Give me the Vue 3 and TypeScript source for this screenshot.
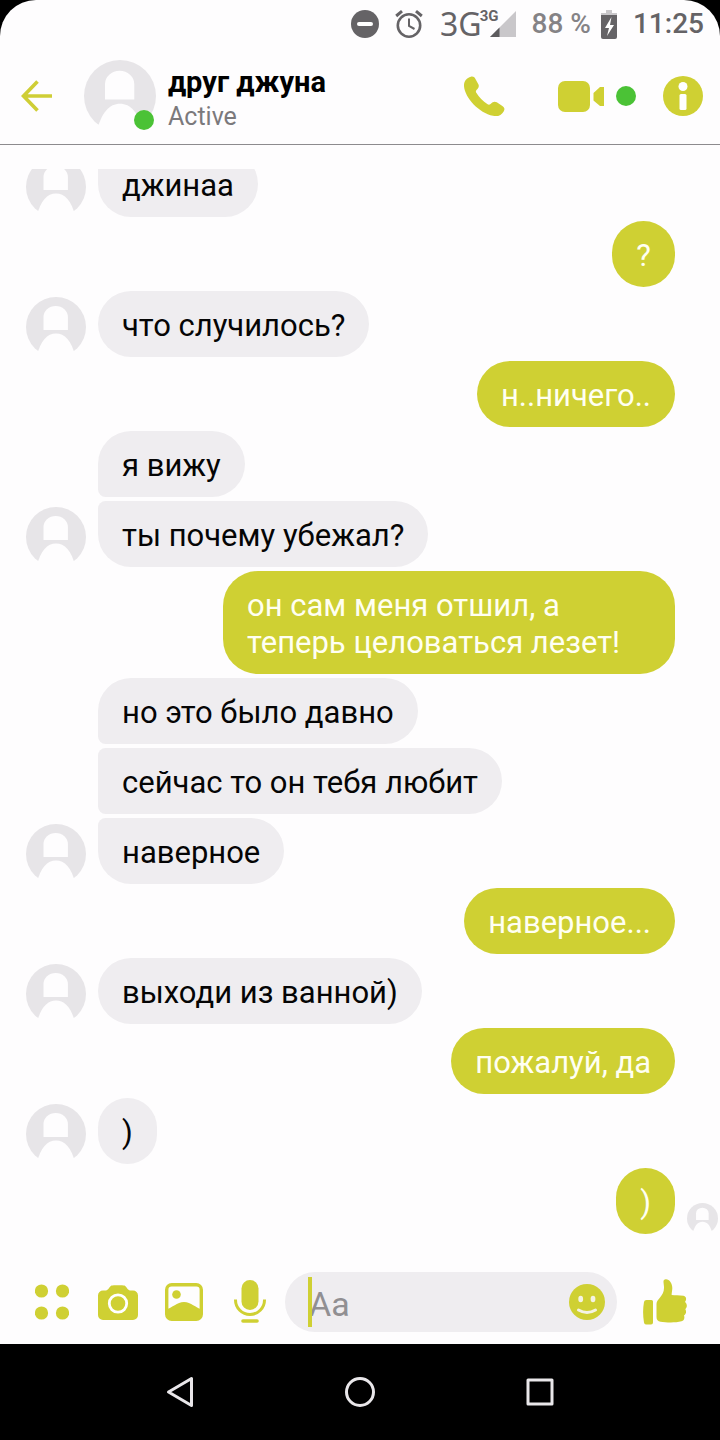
<script setup lang="ts">
import { ref, defineComponent, h } from 'vue'

interface Message {
  id: number
  text: string
  own?: boolean
  avatar?: boolean
  joinTop?: boolean
  joinBottom?: boolean
  seen?: boolean
}

const Avatar = defineComponent({
  setup() {
    return () =>
      h('svg', { viewBox: '0 0 60 60', 'aria-hidden': 'true' }, [
        h('circle', { cx: 30, cy: 30, r: 30, fill: '#e7e5e8' }),
        h('path', { d: 'M17.5 33V20a12.2 11 0 0 1 24.4 0v13z', fill: '#fefdfe' }),
        h('path', { d: 'M10 62C14 44 21 36.500 30 36.500S46 44 50 62z', fill: '#fefdfe' }),
        h('path', { d: 'M0 54h60v7H0z', fill: '#fefdfe' }),
      ])
  },
})

const messages: Message[] = [
  { id: 1, text: 'джинаа', avatar: true, joinTop: true },
  { id: 2, text: '?', own: true },
  { id: 3, text: 'что случилось?', avatar: true },
  { id: 4, text: 'н..ничего..', own: true },
  { id: 5, text: 'я вижу', joinBottom: true },
  { id: 6, text: 'ты почему убежал?', avatar: true, joinTop: true },
  { id: 7, text: 'он сам меня отшил, а теперь целоваться лезет!', own: true },
  { id: 8, text: 'но это было давно', joinBottom: true },
  { id: 9, text: 'сейчас то он тебя любит', joinTop: true, joinBottom: true },
  { id: 10, text: 'наверное', avatar: true, joinTop: true },
  { id: 11, text: 'наверное...', own: true },
  { id: 12, text: 'выходи из ванной)', avatar: true },
  { id: 13, text: 'пожалуй, да', own: true },
  { id: 14, text: ')', avatar: true },
  { id: 15, text: ')', own: true, seen: true },
]

const draft = ref('')
</script>

<template>
  <div class="phone">
    <div class="screen">
      <div class="status">
        <svg class="dnd" viewBox="0 0 28 28"><circle cx="14" cy="14" r="14" fill="#656366" /><rect x="6" y="12" width="16" height="4" rx="2" fill="#fff" /></svg>
        <svg class="alarm" viewBox="0 0 28 28" fill="none" stroke="#656366" stroke-width="2.6">
          <circle cx="14" cy="15.500" r="11.200" /><path d="M14 8.500v7.500l5.500 3" stroke-width="2" /><path d="M1.200 6L7 1.200M26.800 6L21 1.200" stroke-width="3" />
        </svg>
        <span class="net">3G</span>
        <div class="signal">
          <svg viewBox="0 0 26 26"><path d="M26 0v26H0z" fill="#c9c7ca" /><path d="M9.500 16.500V26H0z" fill="#5d5b5e" /></svg>
          <span class="net-small">3G</span>
        </div>
        <span class="percent">88 %</span>
        <svg class="battery" viewBox="0 0 16 29">
          <path d="M5 0h6v3h5v4H0V3h5z" fill="#c9c7ca" /><path d="M0 5h16v22a2 2 0 0 1-2 2H2a2 2 0 0 1-2-2z" fill="#656366" />
          <path d="M10.500 7L4 18h4l-2 8 7-11H9z" fill="#fff" />
        </svg>
        <span class="clock">11:25</span>
      </div>

      <header class="header">
        <button class="icon back" aria-label="Back">
          <svg viewBox="0 0 32 32" fill="none" stroke="#cfce36" stroke-width="3.6"><path d="M31 16H3M16.500 1.500L2.500 16l14 14.500" /></svg>
        </button>
        <div class="portrait"><Avatar class="portrait-img" /><i class="presence"></i></div>
        <div class="who">
          <h1>друг джуна</h1>
          <p>Active</p>
        </div>
        <button class="icon call" aria-label="Call">
          <svg viewBox="0 0 42 42"><path d="M7 .8C9 .2 10.700 1 11.600 2.700L14.700 8.500C15.700 10.500 15 12 12.800 14.300C12 15.200 12 16.100 12.600 17.200C15.500 22 19.200 25.700 24.200 29C25.300 29.700 26.300 29.500 27.200 28.600C29.700 26.300 31.400 25.700 33.600 27L39.300 30.700C41.400 32 42 33.900 40.800 36C38.600 40 34.800 41.800 29.700 40.800C15.500 38 1 22.500 0 10.500C-.3 5.700 2.400 2 7 .8Z" fill="#cfd033" /></svg>
        </button>
        <button class="icon video" aria-label="Video call">
          <svg viewBox="0 0 46 31"><rect width="32" height="31" rx="7" fill="#cfd033" /><path d="M35.500 12L42 6H46V25H42L35.500 19.500Z" fill="#cfd033" /></svg>
        </button>
        <i class="online"></i>
        <button class="icon info" aria-label="Information">
          <svg viewBox="0 0 40 40"><circle cx="20" cy="20" r="20" fill="#cfd033" /><circle cx="20" cy="10.500" r="4.500" fill="#fff" /><rect x="16.500" y="18" width="7" height="16" rx="1.500" fill="#fff" /></svg>
        </button>
      </header>

      <main class="chat">
        <div v-for="m in messages" :key="m.id" class="row" :class="{ own: m.own }">
          <div v-if="!m.own" class="side"><Avatar v-if="m.avatar" class="face" /></div>
          <p class="bubble" :class="{ 'join-top': m.joinTop, 'join-bottom': m.joinBottom }">{{ m.text }}</p>
          <div v-if="m.own" class="receipt"><Avatar v-if="m.seen" class="seen" /></div>
        </div>
      </main>

      <form class="composer" @submit.prevent>
        <button type="button" class="icon tool" aria-label="More">
          <svg width="34" height="36" viewBox="0 0 34 36" fill="#cfd033"><circle cx="6.500" cy="7" r="6.600" /><circle cx="27.500" cy="7" r="6.600" /><circle cx="6.500" cy="29" r="6.600" /><circle cx="27.500" cy="29" r="6.600" /></svg>
        </button>
        <button type="button" class="icon tool" aria-label="Camera">
          <svg width="40" height="36" viewBox="0 -1 40 36"><path d="M5 5.500H8C10 5.500 11.500 1.500 13.500.5C15 0 25 0 26.500.5C28.500 1.500 30 5.500 32 5.500H35A5 5 0 0 1 40 10.500V30A5 5 0 0 1 35 35H5A5 5 0 0 1 0 30V10.500A5 5 0 0 1 5 5.500Z" fill="#cfd033" /><circle cx="20" cy="18.500" r="8.700" fill="#cfd033" stroke="#fff" stroke-width="2.800" /></svg>
        </button>
        <button type="button" class="icon tool" aria-label="Gallery">
          <svg width="38" height="38" viewBox="0 0 38 38"><rect x="1.700" y="1.700" width="34.600" height="34.600" rx="5" fill="none" stroke="#cfd033" stroke-width="3.400" /><circle cx="11.500" cy="11.500" r="4.300" fill="#cfd033" /><path d="M2 26C7 25 12 19 19 19S31 25 36 26V32A4 4 0 0 1 32 36H6A4 4 0 0 1 2 32Z" fill="#cfd033" /></svg>
        </button>
        <button type="button" class="icon tool" aria-label="Voice message">
          <svg width="32" height="44" viewBox="0 0 32 44"><rect x="7.500" y="0" width="17" height="30" rx="8.500" fill="#cfd033" /><path d="M1.500 19.500V20A14.500 14.500 0 0 0 30.500 20V19.500" fill="none" stroke="#cfd033" stroke-width="3" /><path d="M9 41h14" stroke="#cfd033" stroke-width="3.600" stroke-linecap="round" /></svg>
        </button>
        <div class="field">
          <input v-model="draft" type="text" placeholder="Aa" aria-label="Message" />
          <i class="caret"></i>
          <button type="button" class="icon" aria-label="Emoji">
            <svg width="36" height="36" viewBox="0 0 36 36"><circle cx="18" cy="18" r="18" fill="#cfd033" /><ellipse cx="11.700" cy="15" rx="2.400" ry="3.200" fill="#f4f3e4" /><ellipse cx="24" cy="15" rx="2.400" ry="3.200" fill="#f4f3e4" /><path d="M9.500 26Q18 31 26.500 26" fill="none" stroke="#f4f3e4" stroke-width="3" stroke-linecap="round" /></svg>
          </button>
        </div>
        <button type="button" class="icon like" aria-label="Like">
          <svg width="44" height="46" viewBox="0 0 44 46" fill="#cfd033"><path d="M3.500 21H8.500Q10 21 10 22.500V43.500Q10 45.500 8 45.500H3Q1.300 45.500 1 43.500Q-.8 33 1 23Q1.300 21 3.500 21Z" /><path d="M13.500 25C13.500 20 21.500 17 21 8C20.800 4 19.500 1 22 .4C26 -.5 29.300 4 29.300 9C29.300 12 28.500 14 28.700 16C32 16.300 36 16 40.500 16.800C43.500 17.500 43.800 20.500 42 23C44.500 25 44.300 28.500 42.300 30C43.700 32.500 43.200 35 41 36.500C42 39 41 41.500 38.500 42.300C32 44 23 43.500 17.500 42.700C15 42.300 13.500 41 13.500 38Z" /></svg>
        </button>
      </form>
    </div>

    <nav class="nav" aria-label="System">
      <button class="icon" aria-label="System back"><svg width="32" height="32" viewBox="0 0 32 32"><path d="M27.500 2.500V29.500L4.500 16Z" /></svg></button>
      <button class="icon" aria-label="Home"><svg width="32" height="32" viewBox="0 0 32 32"><circle cx="16" cy="16" r="13.500" /></svg></button>
      <button class="icon" aria-label="Recent apps"><svg width="32" height="32" viewBox="0 0 32 32"><rect x="4" y="4" width="24" height="24" /></svg></button>
    </nav>
  </div>
</template>

<style>
body {
  background: #000;
}
</style>

<style scoped>
.phone {
  display: flex;
  flex-direction: column;
  height: 100vh;
  background: #000;
  font-family: Roboto, "Noto Sans", sans-serif;
}
.screen {
  flex: 1;
  min-height: 0;
  display: flex;
  flex-direction: column;
  background: #fefdfe;
  border-radius: 36px 36px 0 0;
}
svg {
  display: block;
  flex: none;
}
.icon {
  display: flex;
  align-items: center;
  justify-content: center;
  padding: 0;
  border: 0;
  background: none;
  flex: none;
}
h1,
p {
  margin: 0;
}
.status {
  display: flex;
  align-items: center;
  justify-content: flex-end;
  height: 48px;
  padding-right: 16px;
  color: #656366;
}
.dnd {
  width: 28px;
  margin-right: 16px;
}
.alarm {
  width: 28px;
  margin-right: 17px;
}
.net {
  font: 32px/48px "Noto Sans", sans-serif;
}
.signal {
  position: relative;
  margin: 0 16px 0 8px;
}
.signal svg {
  width: 26px;
}
.net-small {
  position: absolute;
  right: 17px;
  top: -3px;
  font: bold 15px/16px Roboto, sans-serif;
}
.percent {
  color: #858386;
  font-size: 28px;
  line-height: 50px;
  font-weight: 500;
}
.battery {
  width: 16px;
  margin: 0 16px 0 10px;
}
.clock {
  font-size: 28px;
  line-height: 50px;
  font-weight: 500;
}
.header {
  display: flex;
  align-items: center;
  height: 96px;
  padding: 0 17px 0 21px;
  border-bottom: 1px solid #8d8b8e;
}
.back svg {
  width: 32px;
}
.portrait {
  position: relative;
  margin: 0 12px 0 31px;
}
.portrait-img {
  display: block;
  width: 72px;
}
.presence,
.online {
  width: 20px;
  height: 20px;
  border-radius: 50%;
  background: #4bc236;
}
.presence {
  position: absolute;
  right: 2px;
  bottom: 2px;
}
.who {
  flex: 1;
  padding-top: 6px;
  white-space: nowrap;
}
.who h1 {
  font-size: 29px;
  line-height: 36px;
  font-weight: 700;
}
.who p {
  color: #7b797c;
  font-size: 25px;
  line-height: 34px;
}
.call svg {
  width: 41px;
}
.video {
  margin-left: 53px;
}
.video svg {
  width: 46px;
}
.online {
  margin: 0 27px 0 12px;
}
.info svg {
  width: 40px;
}
.chat {
  flex: 1;
  min-height: 0;
  margin-top: 24px;
  display: flex;
  flex-direction: column;
  justify-content: flex-end;
  gap: 4px;
  overflow: hidden;
}
.row {
  display: flex;
  align-items: flex-end;
  flex: none;
}
.own {
  justify-content: flex-end;
}
.side {
  width: 60px;
  margin: 0 12px 0 26px;
}
.face {
  display: block;
  width: 60px;
}
.bubble {
  box-sizing: border-box;
  max-width: 452px;
  padding: 16px 24px 13px;
  border-radius: 35px;
  background: #efedf0;
  color: #050505;
  font-size: 31px;
  line-height: 37px;
}
.own .bubble {
  background: #cfd033;
  color: #fffff2;
}
.join-top {
  border-top-left-radius: 8px;
}
.join-bottom {
  border-bottom-left-radius: 8px;
}
.receipt {
  width: 31px;
  margin: 0 2px 0 12px;
}
.seen {
  display: block;
  width: 31px;
}
.composer {
  display: flex;
  align-items: center;
  height: 84px;
  margin-top: 26px;
  padding: 0 7px 0 19px;
}
.tool {
  width: 66px;
}
.field {
  position: relative;
  flex: 1;
  min-width: 0;
  display: flex;
  align-items: center;
  height: 60px;
  margin-left: 2px;
  padding: 0 12px 0 24px;
  box-sizing: border-box;
  border-radius: 30px;
  background: #efedf0;
}
.field input {
  flex: 1;
  min-width: 0;
  padding: 4px 0 0;
  border: 0;
  outline: 0;
  background: none;
  font: 34px/40px Roboto, sans-serif;
  color: #050505;
}
.field input::placeholder {
  color: #918f92;
  opacity: 1;
}
.caret {
  position: absolute;
  left: 23px;
  top: 5px;
  bottom: 5px;
  width: 4px;
  background: #cfd033;
}
.like {
  width: 96px;
}
.nav {
  display: flex;
  justify-content: center;
  height: 96px;
}
.nav .icon {
  width: 25%;
}
.nav svg {
  fill: none;
  stroke: #e9e7ea;
  stroke-width: 3;
  stroke-linejoin: round;
}
</style>
